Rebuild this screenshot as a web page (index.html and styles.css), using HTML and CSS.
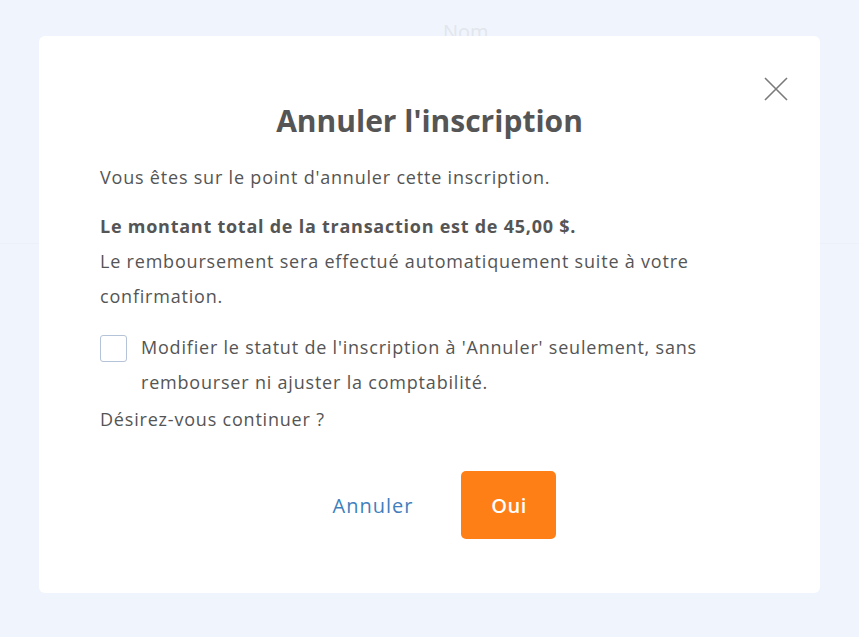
FILE: index.html
```html
<!DOCTYPE html>
<html lang="fr">
<head>
<meta charset="utf-8">
<link rel="stylesheet" href="styles.css">
</head>
<body>
<div class="page">
  <div class="bg-label">Nom</div>
  <div class="bg-line"></div>
  <div class="modal">
    <button class="close" aria-label="Fermer">
      <svg width="24" height="24" viewBox="0 0 24 24"><path d="M1 1 L23 23 M23 1 L1 23" stroke="#7a7a7a" stroke-width="1.6" fill="none"/></svg>
    </button>
    <h1 class="title">Annuler l'inscription</h1>
    <p class="text first">Vous êtes sur le point d'annuler cette inscription.</p>
    <p class="text bold">Le montant total de la transaction est de 45,00 $.</p>
    <p class="text">Le remboursement sera effectué automatiquement suite à votre confirmation.</p>
    <label class="check">
      <span class="box"></span>
      <span class="text">Modifier le statut de l'inscription à 'Annuler' seulement, sans rembourser ni ajuster la comptabilité.</span>
    </label>
    <p class="text last">Désirez-vous continuer ?</p>
    <div class="actions">
      <button class="link">Annuler</button>
      <button class="primary">Oui</button>
    </div>
  </div>
</div>
</body>
</html>
```
FILE: styles.css
```css
html, body { margin: 0; padding: 0; }
body { background: #f0f5fd; font-family: "Open Sans", sans-serif; }
.page { position: relative; width: 859px; height: 637px; overflow: hidden; }
.bg-label { position: absolute; left: 443px; top: 18px; font-size: 20px; color: #e2e6ec; }
.bg-line { position: absolute; left: 0; right: 0; top: 243px; height: 1px; background: #ecf1f9; }
.modal { position: absolute; left: 39px; top: 36px; width: 781px; height: 557px; background: #fff; border-radius: 6px; box-sizing: border-box; padding: 60px 61px 0; }
.close { position: absolute; left: 725px; top: 41px; background: none; border: 0; padding: 0; width: 24px; height: 24px; cursor: pointer; }
.title { margin: 0 0 14px; text-align: center; font-size: 30px; font-weight: 700; color: #555; line-height: 50px; }
.text { margin: 0; font-size: 18px; letter-spacing: 0.8px; line-height: 35px; color: #555; }
.first { margin-bottom: 14px; }
.bold { font-weight: 700; letter-spacing: 0.75px; }
.check { display: flex; gap: 14px; margin-top: 16px; }
.box { flex: none; width: 25px; height: 25px; border: 1px solid #b4c3d8; border-radius: 3px; margin-top: 5px; }
.last { margin-top: 2px; }
.actions { display: flex; justify-content: center; align-items: center; gap: 48px; margin-top: 34px; padding-left: 30px; }
.link { background: none; border: 0; font-family: "Open Sans", sans-serif; font-size: 20px; color: #3f7fbd; letter-spacing: 1px; padding: 0; cursor: pointer; }
.primary { width: 95px; height: 68px; background: #ff7f17; border: 0; border-radius: 5px; color: #fff; font-family: "Open Sans", sans-serif; font-size: 20px; font-weight: 600; letter-spacing: 0.5px; cursor: pointer; }
```
